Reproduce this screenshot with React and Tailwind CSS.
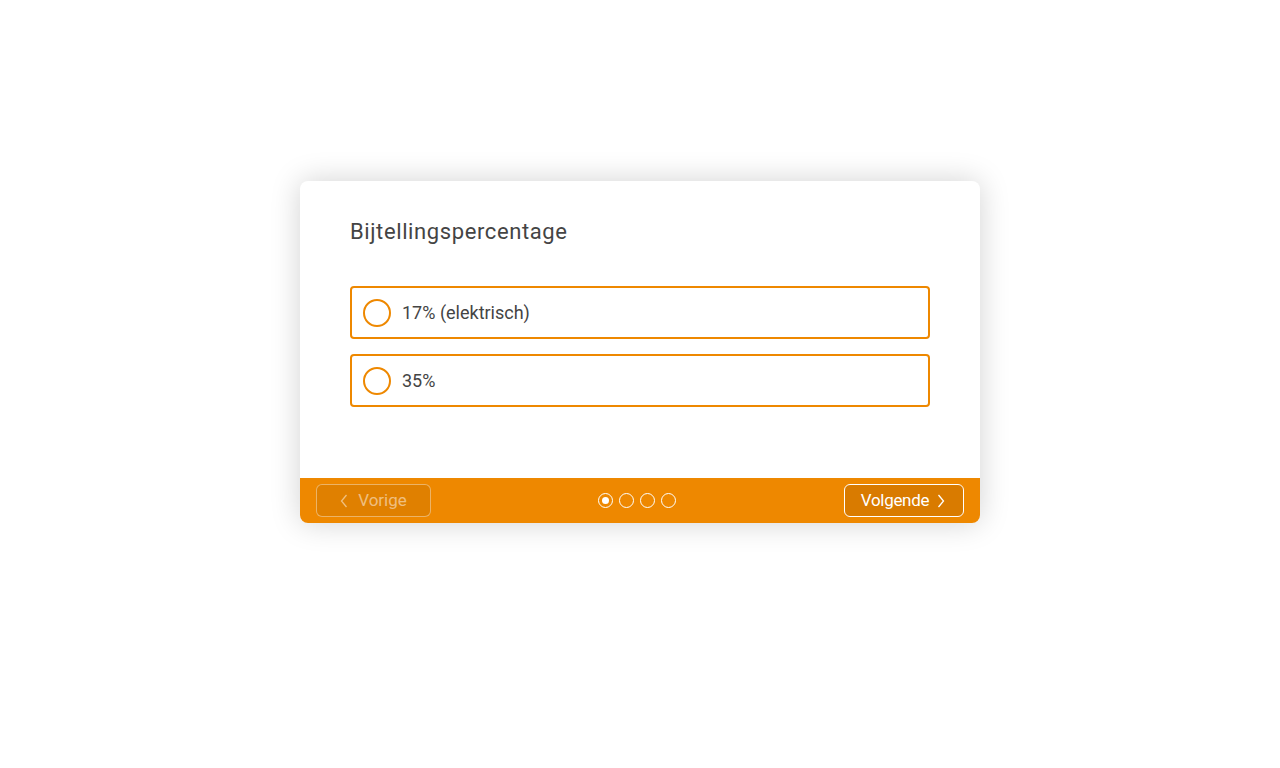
import { useState } from 'react';

const options = ['17% (elektrisch)', '35%'];

export default function App() {
    const [selected, setSelected] = useState(null);

    return (
        <div className="min-h-[768px] bg-white pt-[181px]" style={{ fontFamily: 'Roboto, "Noto Sans", sans-serif' }}>
            <div className="mx-auto w-[680px] rounded-lg bg-white shadow-[0_0_30px_rgba(0,0,0,0.18)] overflow-hidden">
                {/* Question */}
                <div className="px-[50px] pt-[36px] pb-[71px]">
                    <h2 className="text-[22px] leading-[30px] text-[#444] tracking-[0.6px]">Bijtellingspercentage</h2>
                    <div className="mt-[39px] flex flex-col gap-[15px]">
                        {options.map((opt, i) => (
                            <button
                                key={i}
                                onClick={() => setSelected(i)}
                                className="flex h-[53px] items-center gap-[11px] rounded border-2 border-[#ee8800] bg-white pl-[11px] text-left"
                            >
                                <span className="flex h-[28px] w-[28px] items-center justify-center rounded-full border-2 border-[#ee8800]">
                                    {selected === i && <span className="h-[14px] w-[14px] rounded-full bg-[#ee8800]" />}
                                </span>
                                <span className="text-[18px] text-[#444]">{opt}</span>
                            </button>
                        ))}
                    </div>
                </div>

                {/* Footer */}
                <div className="flex h-[45px] items-center justify-between bg-[#ee8800] px-4">
                    <button className="flex h-[33px] w-[115px] items-center justify-center gap-[10px] rounded-md border border-white/40 bg-[#e08000] text-[17px] text-white/50">
                        <svg width="8" height="14" viewBox="0 0 8 14" fill="none" stroke="currentColor" strokeWidth="1.3">
                            <path d="M6.5 1 L1.5 7 L6.5 13" />
                        </svg>
                        Vorige
                    </button>
                    <div className="-ml-[2px] flex gap-[6px]">
                        {[0, 1, 2, 3].map((d) => (
                            <span key={d} className="flex h-[15px] w-[15px] items-center justify-center rounded-full border border-white">
                                {d === 0 && <span className="h-[7px] w-[7px] rounded-full bg-white" />}
                            </span>
                        ))}
                    </div>
                    <button className="flex h-[33px] w-[120px] items-center justify-center gap-[8px] rounded-md border border-white bg-[#d97b00] pr-[2px] text-[17px] tracking-[-0.3px] text-white">
                        Volgende
                        <svg width="8" height="14" viewBox="0 0 8 14" fill="none" stroke="currentColor" strokeWidth="1.3">
                            <path d="M1.5 1 L6.5 7 L1.5 13" />
                        </svg>
                    </button>
                </div>
            </div>
        </div>
    );
}
